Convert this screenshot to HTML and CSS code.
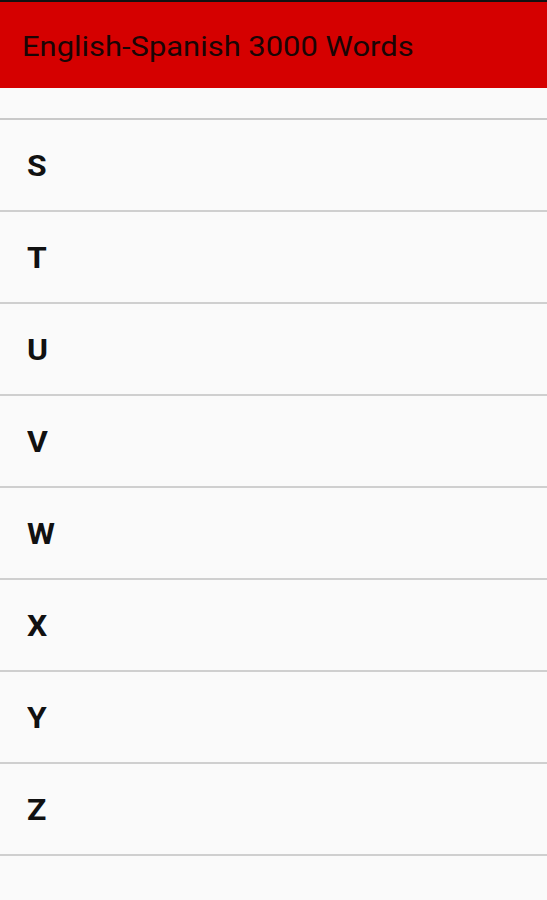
FILE: index.html
```html
<!DOCTYPE html>
<html>
<head>
<meta charset="utf-8">
<link rel="stylesheet" href="styles.css">
</head>
<body>
<div class="status"></div>
<header class="appbar"><h1 class="title">English-Spanish 3000 Words</h1></header>
<div class="spacer"></div>
<ul class="list">
  <li class="row"><span class="letter">S</span></li>
  <li class="row"><span class="letter">T</span></li>
  <li class="row"><span class="letter">U</span></li>
  <li class="row"><span class="letter">V</span></li>
  <li class="row"><span class="letter">W</span></li>
  <li class="row"><span class="letter">X</span></li>
  <li class="row"><span class="letter">Y</span></li>
  <li class="row"><span class="letter">Z</span></li>
</ul>
</body>
</html>
```
FILE: styles.css
```css
html, body {
  margin: 0;
  padding: 0;
  background: #fafafa;
  font-family: Roboto, "Liberation Sans", sans-serif;
  width: 547px;
  height: 900px;
  overflow: hidden;
}
.status {
  height: 2px;
  background: #111;
}
.appbar {
  height: 86px;
  background: #d50000;
  display: flex;
  align-items: center;
  padding-left: 22px;
  box-sizing: border-box;
}
.title {
  margin: 0;
  font-size: 27px;
  font-weight: 400;
  color: #1a0505;
  padding-top: 4px;
  transform: scaleX(1.145);
  transform-origin: left center;
  white-space: nowrap;
}
.spacer {
  height: 30px;
  border-bottom: 2px solid #c9c9c9;
}
.list {
  list-style: none;
  margin: 0;
  padding: 0;
}
.row {
  height: 90px;
  border-bottom: 2px solid #cfcfcf;
  display: flex;
  align-items: center;
  padding-left: 27px;
  font-size: 29px;
  font-weight: 700;
  color: #111;
}
.letter {
  display: inline-block;
  transform: scaleX(1.1);
  transform-origin: left center;
  padding-top: 2px;
}
```
